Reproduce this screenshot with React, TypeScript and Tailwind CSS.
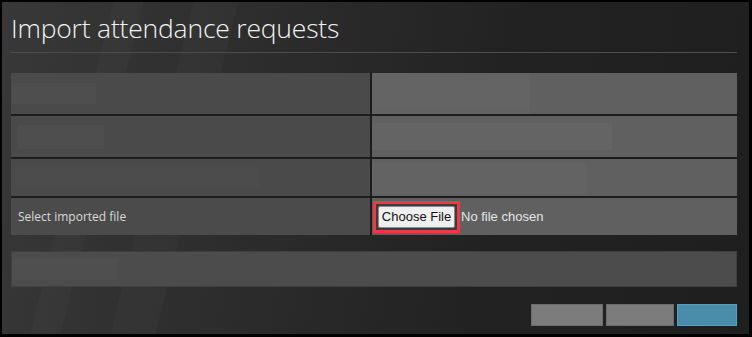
import React from 'react';

// Import dialog: title, form grid, blank row and action buttons
const font = { fontFamily: '"Open Sans", "Liberation Sans", sans-serif' };

export default function App() {
  return (
    <div className="w-[752px] h-[337px] bg-black p-[2px] pr-[3px] pb-[3px]" style={font}>
      <div className="relative w-full h-full overflow-hidden bg-[linear-gradient(100deg,#383838_0%,#2c2c2c_35%,#222222_65%,#1f1f1f_100%)] pl-[9px] pr-[12px]">
        {/* soft diagonal streaks */}
        <div className="absolute left-[70px] top-0 w-[30px] h-full bg-white/[0.025] skew-x-[-14deg]" />
        <div className="absolute left-[150px] top-0 w-[45px] h-full bg-white/[0.02] skew-x-[-14deg]" />

        <div className="relative">
          <h1 className="pt-[9px] h-[50px] text-[26.5px] leading-[34px] font-light text-[#f2f2f2] tracking-[-0.2px]">
            Import attendance requests
          </h1>
          <div className="h-px bg-[#4c4c4c]" />

          {/* form grid */}
          <div className="mt-[20px] grid grid-cols-[359px_1fr] gap-[2px] bg-[#1c1c1c]">
            <div className="h-[41px] bg-[#4a4a4a] flex items-center pl-[1px]">
              <div className="w-[84px] h-[21px] bg-[#4e4e4e]" />
            </div>
            <div className="h-[41px] bg-[#636363] flex items-center">
              <div className="w-[158px] h-[33px] bg-[#646464]" />
              <div className="flex-1 h-full bg-[#606060]" />
            </div>

            <div className="h-[41px] bg-[#4a4a4a] flex items-center pl-[7px]">
              <div className="w-[86px] h-[24px] bg-[#4e4e4e]" />
            </div>
            <div className="h-[41px] bg-[#606060] flex items-center">
              <div className="w-[240px] h-[27px] bg-[#646464]" />
            </div>

            <div className="h-[37px] bg-[#4a4a4a] flex items-center pl-[4px]">
              <div className="w-[244px] h-[22px] bg-[#4c4c4c]" />
            </div>
            <div className="h-[37px] bg-[#606060] flex items-center">
              <div className="w-[215px] h-[32px] bg-[#636363]" />
            </div>

            <div className="h-[37px] bg-[#4b4b4b] flex items-center pl-[7px] text-[12px] text-[#d9d9d9]">
              Select imported file
            </div>
            <div className="h-[37px] bg-[#606060] flex items-center pl-[1px]">
              <div className="border-[3px] border-[#ec3b43] p-[2px] bg-[#3c3c3c]">
                <button
                  className="block h-[22px] w-[77px] bg-[#efefef] border border-[#8a8a8a] rounded-[2px] text-[13px] leading-none text-[#111]"
                  style={{ fontFamily: '"Liberation Sans", Arial, sans-serif' }}
                >
                  Choose File
                </button>
              </div>
              <span
                className="ml-[1px] text-[13px] text-[#e6e6e6]"
                style={{ fontFamily: '"Liberation Sans", Arial, sans-serif' }}
              >
                No file chosen
              </span>
            </div>
          </div>

          {/* blank full row */}
          <div className="mt-[16px] h-[36px] bg-[#4c4c4c] border border-[#3f3f3f] flex items-center">
            <div className="w-[105px] h-[22px] bg-[#4f4f4f]" />
          </div>

          {/* actions */}
          <div className="mt-[17px] flex justify-end gap-[3px]">
            <div className="w-[72px] h-[22px] bg-[#7c7c7c] border border-[#6c6c6c]" />
            <div className="w-[68px] h-[22px] bg-[#7c7c7c] border border-[#6c6c6c]" />
            <div className="w-[60px] h-[22px] bg-[#4a8dab] border border-[#5a9cba]" />
          </div>
        </div>
      </div>
    </div>
  );
}
